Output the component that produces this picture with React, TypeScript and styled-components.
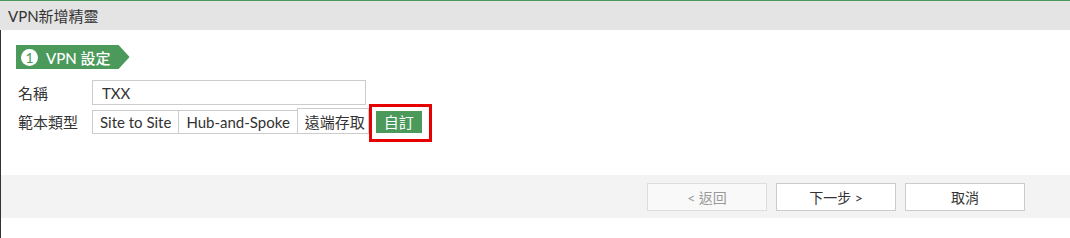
import React from 'react';
import styled, {createGlobalStyle} from "styled-components";

const GlobalStyle = createGlobalStyle`
  html, body {
    margin: 0;
    padding: 0;
    background: #fff;
    overflow: hidden;
  }
  body {
    font-family: Lato, "Noto Sans CJK TC", sans-serif;
    color: #333;
  }
`

const templates = ['Site to Site', 'Hub-and-Spoke', '遠端存取']

export default function App() {
    return (
        <>
            <GlobalStyle/>
            <Wizard>
                <Header>VPN新增精靈</Header>
                <Main>
                    <Body>
                        <Step>
                            <StepNumber>1</StepNumber>
                            VPN 設定
                        </Step>
                        <Form>
                            <Label>名稱</Label>
                            <TextInput value={'TXX'} readOnly/>
                            <Label>範本類型</Label>
                            <Segments>
                                {templates.map((t, i) => (
                                    <Segment key={t} $raised={i === templates.length - 1}>{t}</Segment>
                                ))}
                                <Selected>自訂</Selected>
                            </Segments>
                        </Form>
                    </Body>
                    <Footer>
                        <FooterButton disabled>&lt; 返回</FooterButton>
                        <FooterButton>下一步 &gt;</FooterButton>
                        <FooterButton>取消</FooterButton>
                    </Footer>
                </Main>
            </Wizard>
        </>
    );
}

const Wizard = styled.div`
  width: 1070px;
  height: 238px;
  border-top: 1px solid #4b9a5c;
  box-sizing: border-box;
  display: flex;
  flex-direction: column;
`

const Header = styled.div`
  height: 29px;
  background: #e4e4e4;
  padding-left: 8px;
  display: flex;
  align-items: center;
  font-size: 15px;
  color: #333;
  flex-shrink: 0;
`

const Main = styled.div`
  flex: 1;
  border-left: 1px solid #333;
`

const Body = styled.div`
  padding: 15px 0 0 15px;
  height: 145px;
  box-sizing: border-box;
`

const Step = styled.div`
  display: inline-flex;
  align-items: center;
  gap: 8px;
  height: 24px;
  padding: 0 19px 0 5px;
  background: #4b9a5c;
  color: #fff;
  font-size: 15px;
  font-weight: 500;
  clip-path: polygon(0 0, calc(100% - 11px) 0, 100% 50%, calc(100% - 11px) 100%, 0 100%);
`

const StepNumber = styled.span`
  width: 17px;
  height: 17px;
  border-radius: 50%;
  background: #fff;
  color: #4b9a5c;
  font-size: 14px;
  font-weight: 400;
  display: flex;
  align-items: center;
  justify-content: center;
`

const Form = styled.div`
  display: grid;
  grid-template-columns: 76px auto;
  row-gap: 4px;
  margin-top: 11px;
  justify-content: start;
  align-items: center;
`

const Label = styled.div`
  font-size: 15px;
  color: #333;
  padding-left: 2px;
`

const TextInput = styled.input`
  width: 274px;
  height: 25px;
  box-sizing: border-box;
  border: 1px solid #ccc;
  padding: 0 9px;
  font-family: Lato, "Noto Sans CJK TC", sans-serif;
  font-size: 15px;
  color: #333;
  outline: none;
`

const Segments = styled.div`
  display: flex;
  align-items: center;
`

const Segment = styled.div<{ $raised?: boolean }>`
  height: ${p => p.$raised ? 26 : 24}px;
  box-sizing: border-box;
  border: 1px solid #ccc;
  margin-left: -1px;
  padding: 0 ${p => p.$raised ? 3 : 7}px 0 7px;
  display: flex;
  align-items: center;
  font-size: 15px;
  color: #333;
  background: #fff;
  margin-top: ${p => p.$raised ? -1 : 0}px;

  &:first-child {
    margin-left: 0;
  }
`

const Selected = styled.div`
  position: relative;
  margin-left: 7px;
  height: 22px;
  width: 46px;
  background: #4b9a5c;
  color: #fff;
  font-size: 15px;
  display: flex;
  align-items: center;
  justify-content: center;

  &::after {
    content: '';
    position: absolute;
    left: -7px;
    top: -7px;
    right: -10px;
    bottom: -9px;
    border: 3px solid #e60000;
  }
`

const Footer = styled.div`
  height: 43px;
  background: #f3f3f3;
  display: flex;
  justify-content: flex-end;
  align-items: center;
  gap: 9px;
  padding-right: 45px;
  box-sizing: border-box;
`

const FooterButton = styled.button`
  width: 120px;
  height: 28px;
  box-sizing: border-box;
  border: 1px solid #ccc;
  background: #fff;
  color: #333;
  font-family: Lato, "Noto Sans CJK TC", sans-serif;
  font-size: 14px;
  padding: 0;

  &:disabled {
    background: #f9f9f9;
    border-color: #ddd;
    color: #999;
  }
`
